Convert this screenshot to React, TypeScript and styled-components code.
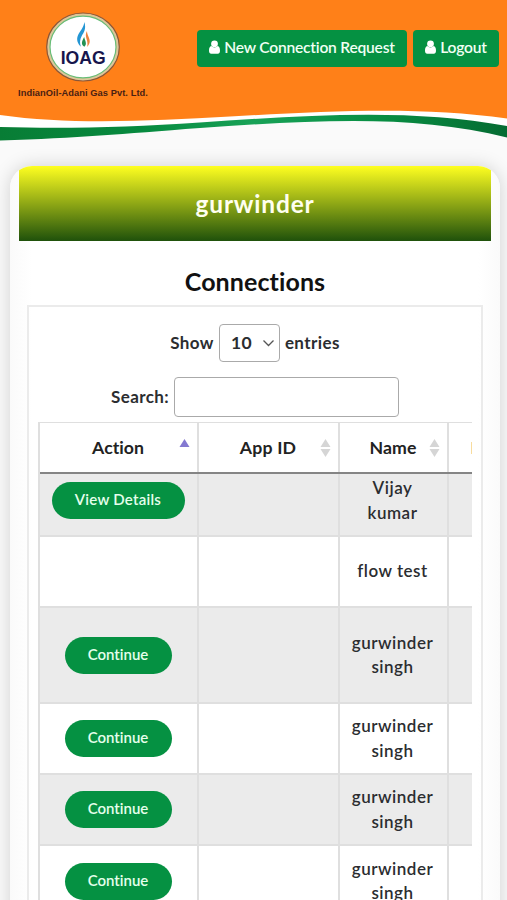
import React from "react";
import styled, { createGlobalStyle } from "styled-components";

const GlobalStyle = createGlobalStyle`
  *, *::before, *::after { box-sizing: border-box; }
  html, body { margin: 0; height: 100%; overflow: hidden; }
  body {
    background: #fafafa;
    color: #2b2d30;
    font-family: Lato, "Open Sans", sans-serif;
    font-size: 17px;
    font-variant-ligatures: none;
  }
  button, select, input { font: inherit; letter-spacing: inherit; }
`;

const Page = styled.div`
  display: flex;
  flex-direction: column;
  height: 900px;
  overflow: hidden;
`;

const Header = styled.header`
  position: relative;
  display: flex;
  justify-content: space-between;
  align-items: flex-start;
  flex: none;
  height: 166px;
  padding: 12px 8px 0 18px;
`;

const Waves = styled.svg`
  position: absolute;
  inset: 0;
  width: 100%;
  height: 144px;
  z-index: -1;
`;

const Brand = styled.div`
  display: flex;
  flex-direction: column;
  align-items: center;
  width: 130px;
`;

const Emblem = styled.svg`
  display: block;
  width: 76px;
  height: 70px;
`;

const BrandName = styled.div`
  margin-top: 5px;
  color: #4a2013;
  font: bold 9.3px/12px "Liberation Sans", Arial, sans-serif;
  letter-spacing: 0.06px;
  white-space: nowrap;
`;

const Nav = styled.nav`
  display: flex;
  gap: 6px;
  padding-top: 18px;
`;

const NavButton = styled.button<{ $width: number }>`
  display: flex;
  align-items: center;
  justify-content: center;
  gap: 4px;
  width: ${(p) => p.$width}px;
  height: 37px;
  padding: 0 0 3px;
  border: 0;
  border-radius: 4px;
  background: #059142;
  color: #f0fff4;
  font-size: 15.6px;
  font-weight: 600;
  letter-spacing: -0.22px;
  white-space: nowrap;
`;

const Card = styled.main`
  flex: none;
  width: 490px;
  height: 780px;
  margin-left: 10px;
  padding: 0 9px;
  border-radius: 22px;
  background: linear-gradient(90deg, #fafafa, #fff 22px, #fff calc(100% - 22px), #fafafa);
  box-shadow: 0 0 18px rgba(0, 0, 0, 0.17);
  overflow: hidden;
`;

const Banner = styled.h1`
  display: flex;
  align-items: center;
  justify-content: center;
  height: 75px;
  margin: 0;
  background: linear-gradient(#ffff20, #1f510b);
  color: #fffff0;
  font-size: 24.5px;
  font-weight: 700;
  letter-spacing: 0.8px;
`;

const Title = styled.h2`
  height: 64px;
  margin: 0;
  padding-top: 24px;
  color: #111;
  font-size: 25px;
  font-weight: 700;
  line-height: 32px;
  letter-spacing: 0.1px;
  text-align: center;
`;

const Panel = styled.section`
  width: 456px;
  height: 640px;
  margin-left: 8px;
  padding: 17px 10px 0;
  border: 2px solid #ebebeb;
`;

const Control = styled.label<{ $height: number; $gap: number }>`
  display: flex;
  align-items: center;
  justify-content: center;
  gap: 5px;
  height: ${(p) => p.$height}px;
  margin-bottom: ${(p) => p.$gap}px;
  font-weight: 700;
  letter-spacing: 0.4px;
`;

const Picker = styled.span`
  display: flex;
  align-items: center;
  justify-content: space-between;
  width: 61px;
  height: 38px;
  padding: 0 4px 0 11px;
  border: 1px solid #aaa;
  border-radius: 4px;
  background: #fff;
  font-size: 17.5px;
`;

const SearchInput = styled.input`
  width: 225px;
  height: 40px;
  border: 1px solid #aaa;
  border-radius: 4px;
  background: #fff;
`;

const Scroller = styled.div`
  width: 434px;
  overflow: hidden;
  margin-left: -1px;
`;

const Table = styled.div`
  width: 560px;
  border-left: 2px solid #dfdfdf;
`;

const Row = styled.div<{ $height: number; $shaded?: boolean }>`
  display: grid;
  grid-template-columns: 159px 141px 109px 149px;
  height: ${(p) => p.$height}px;
  background: ${(p) => (p.$shaded ? "#ebebeb" : "#fff")};
  border-bottom: 2px solid #dfdfdf;
`;

const HeadRow = styled(Row)`
  border-top: 1px solid #dfdfdf;
  border-bottom: 2px solid #858585;
  color: #222;
  font-size: 17.7px;
  font-weight: 700;
`;

const Cell = styled.div<{ $top?: boolean }>`
  display: flex;
  align-items: ${(p) => (p.$top ? "flex-start" : "center")};
  justify-content: center;
  padding: 0 12px 0 10px;
  border-right: 2px solid #dfdfdf;
  font-weight: 600;
  line-height: 24.5px;
  letter-spacing: 0.5px;
  text-align: center;
`;

const HeadCell = styled.div<{ $spacing: number }>`
  display: flex;
  align-items: center;
  justify-content: flex-end;
  padding: 0 7px 0 0;
  border-right: 2px solid #dfdfdf;
  letter-spacing: ${(p) => p.$spacing}px;

  span { flex: 1; padding-left: 17px; text-align: center; }
`;

const ClippedHeadCell = styled.div`
  display: flex;
  align-items: center;
  padding-left: 21.5px;
`;

const Pill = styled.button<{ $wide?: boolean }>`
  width: ${(p) => (p.$wide ? 133 : 107)}px;
  height: 37px;
  margin-top: ${(p) => (p.$wide ? 8 : 0)}px;
  margin-left: 1px;
  padding: 0 0 2px;
  border: 0;
  border-radius: 19px;
  background: #059142;
  color: #e5ffec;
  font-size: 15px;
  font-weight: 600;
  letter-spacing: ${(p) => (p.$wide ? 0.25 : 0)}px;
  white-space: nowrap;
`;

const Name = styled.span<{ $top?: boolean }>`
  padding-top: ${(p) => (p.$top ? 2 : 0)}px;
`;

const UserIcon = () => (
  <svg width="11" height="14" viewBox="0 0 11 14" fill="#fff">
    <circle cx="5.5" cy="3.8" r="3.4" />
    <path d="M2.3 6.1C.8 6.4 0 8.1 0 10.8 0 12.9.9 13.7 2.2 13.7h6.6c1.3 0 2.2-.8 2.2-2.9 0-2.7-.8-4.4-2.3-4.7-1.8 1.8-4.6 1.8-6.4 0Z" />
  </svg>
);

const SortIcon = ({ active }: { active?: boolean }) => (
  <svg width="11" height="18" viewBox="0 0 11 18">
    <path d="M5.5 0 10.5 8H.5Z" fill={active ? "#8479d1" : "#d5d5d5"} />
    {!active && <path d="M5.5 18 .5 10h10Z" fill="#d5d5d5" />}
  </svg>
);

const Logo = () => (
  <Emblem viewBox="0 0 76 70">
    <ellipse cx="38" cy="35" rx="36.3" ry="34" fill="#dcc79a" stroke="#8b5638" strokeWidth="1.2" />
    <ellipse cx="38" cy="35" rx="33" ry="30.9" fill="#fff" stroke="#68bd78" strokeWidth="1.2" />
    <path d="M39.4 10c2 7.2-.5 10.2-2.7 14-2 3.7-2.1 7.2-.8 10.8-3.4-3.2-4.7-7-3-11.2 1.7-4.1 5.8-7.7 6.5-13.6Z" fill="#2396d4" />
    <path d="M42 19c-.2 4.2 3.8 8 2.5 12-.4 1.5-1.2 2.8-2.3 4 .6-3.4.2-5.5-.8-8.5-.8-2.6-.8-5.1.6-7.5Z" fill="#ed843f" />
    <path d="M39.2 25c.5 3.4 3.5 6.6.2 9.8-4.2-2.6-2.1-6.3-.2-9.8Z" fill="#239253" />
    <text x="38.2" y="51.5" textAnchor="middle" textLength="45" lengthAdjust="spacingAndGlyphs" fill="#17164d" fontFamily="Liberation Sans, Arial, sans-serif" fontWeight="700" fontSize="18">IOAG</text>
  </Emblem>
);

const rows = [
  { name: "Vijay kumar", action: "View Details", height: 63 },
  { name: "flow test", action: "", height: 71 },
  { name: "gurwinder singh", action: "Continue", height: 96 },
  { name: "gurwinder singh", action: "Continue", height: 71 },
  { name: "gurwinder singh", action: "Continue", height: 71 },
  { name: "gurwinder singh", action: "Continue", height: 72 },
];

export default function App() {
  return (
    <>
      <GlobalStyle />
      <Page>
        <Header>
          <Waves viewBox="0 0 507 144" preserveAspectRatio="none">
            <defs>
              <linearGradient id="ribbon">
                <stop offset="0" stopColor="#087d35" />
                <stop offset=".28" stopColor="#078a3f" />
                <stop offset=".5" stopColor="#18a257" />
                <stop offset=".75" stopColor="#088e43" />
                <stop offset="1" stopColor="#056b32" />
              </linearGradient>
            </defs>
            <path d="M0 0H507V126C410 108 310 115 200 122S60 130 0 127Z" fill="#fff" />
            <path d="M0 0H507V118.5C420 106 330 111 230 116.5C150 121 70 125 0 115Z" fill="#ff8018" />
            <path d="M0 127C70 129 130 127 200 122.5C310 115 410 108 507 126V137.5C415 114 315 120 200 128C120 134 80 138 0 140.5Z" fill="url(#ribbon)" />
          </Waves>
          <Brand>
            <Logo />
            <BrandName>IndianOil-Adani Gas Pvt. Ltd.</BrandName>
          </Brand>
          <Nav>
            <NavButton $width={210}><UserIcon />New Connection Request</NavButton>
            <NavButton $width={86}><UserIcon />Logout</NavButton>
          </Nav>
        </Header>
        <Card>
          <Banner>gurwinder</Banner>
          <Title>Connections</Title>
          <Panel>
            <Control $height={37} $gap={15}>
              Show
              <Picker>
                10
                <svg width="13" height="8" viewBox="0 0 13 8" fill="none" stroke="#555" strokeWidth="1.3">
                  <path d="m1.5 1.5 5 5 5-5" />
                </svg>
              </Picker>
              entries
            </Control>
            <Control $height={41} $gap={5}>
              Search:
              <SearchInput aria-label="Search" />
            </Control>
            <Scroller>
              <Table>
                <HeadRow $height={52}>
                  <HeadCell $spacing={0}><span>Action</span><SortIcon active /></HeadCell>
                  <HeadCell $spacing={0.2}><span>App ID</span><SortIcon /></HeadCell>
                  <HeadCell $spacing={0.1}><span>Name</span><SortIcon /></HeadCell>
                  <ClippedHeadCell>Mobile</ClippedHeadCell>
                </HeadRow>
                {rows.map((row, index) => (
                  <Row key={index} $height={row.height} $shaded={index % 2 === 0}>
                    <Cell $top={index === 0}>
                      {row.action && <Pill $wide={index === 0}>{row.action}</Pill>}
                    </Cell>
                    <Cell />
                    <Cell $top={index === 0}><Name $top={index === 0}>{row.name}</Name></Cell>
                    <Cell />
                  </Row>
                ))}
              </Table>
            </Scroller>
          </Panel>
        </Card>
      </Page>
    </>
  );
}
